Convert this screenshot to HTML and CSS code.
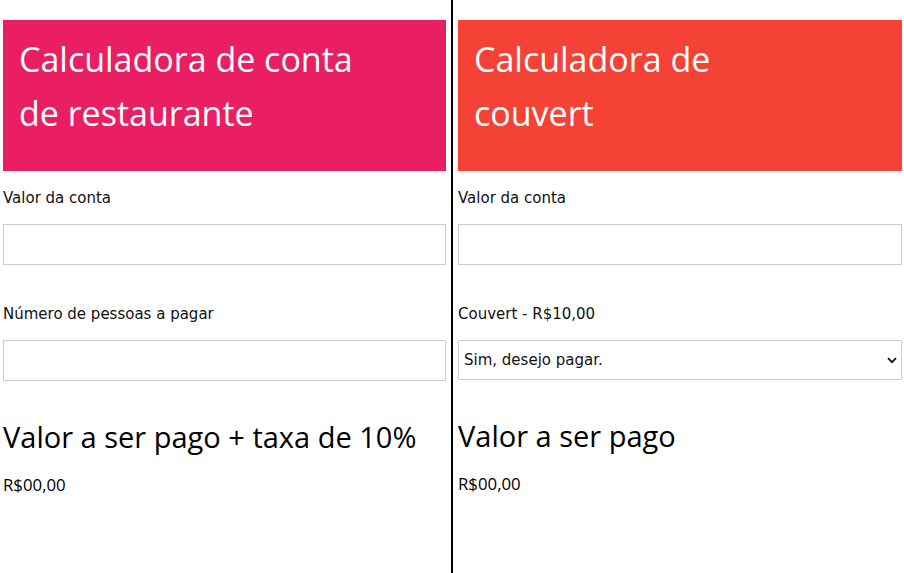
FILE: index.html
```html
<!DOCTYPE html>
<html lang="pt-BR">
<head>
<meta charset="utf-8">
<title>Calculadoras</title>
<link rel="stylesheet" href="styles.css">
</head>
<body>
<div class="app">
  <section class="calc calc-left">
    <header class="banner banner-pink">
      <h1 class="banner-title">Calculadora de conta<br>de restaurante</h1>
    </header>
    <div class="form">
      <div class="field">
        <label class="field-label" for="conta1">Valor da conta</label>
        <input class="field-input" id="conta1" type="text">
      </div>
      <div class="field">
        <label class="field-label" for="pessoas">Número de pessoas a pagar</label>
        <input class="field-input" id="pessoas" type="text">
      </div>
    </div>
    <h2 class="result-title">Valor a ser pago + taxa de 10%</h2>
    <p class="result-value">R$00,00</p>
  </section>
  <section class="calc calc-right">
    <header class="banner banner-red">
      <h1 class="banner-title">Calculadora de<br>couvert</h1>
    </header>
    <div class="form">
      <div class="field">
        <label class="field-label" for="conta2">Valor da conta</label>
        <input class="field-input" id="conta2" type="text">
      </div>
      <div class="field">
        <label class="field-label" for="couvert">Couvert - R$10,00</label>
        <div class="select-wrap">
          <select class="field-input field-select" id="couvert">
            <option>Sim, desejo pagar.</option>
            <option>Não, obrigado.</option>
          </select>
          <svg class="select-arrow" width="10" height="7" viewBox="0 0 10 7"><path d="M1 1.2 L5 5.2 L9 1.2" fill="none" stroke="#111" stroke-width="1.8"/></svg>
        </div>
      </div>
    </div>
    <h2 class="result-title">Valor a ser pago</h2>
    <p class="result-value">R$00,00</p>
  </section>
</div>
</body>
</html>
```
FILE: styles.css
```css
html, body {
  margin: 0;
  padding: 0;
  background: #fff;
}
body {
  font-family: "Open Sans", "Noto Sans", sans-serif;
  color: #000;
}
.app {
  display: grid;
  grid-template-columns: 453px 1fr;
  min-height: 100vh;
}
.calc {
  padding-top: 20px;
  min-height: 573px;
  box-sizing: border-box;
}
.calc-left {
  padding-left: 3px;
  padding-right: 5px;
  border-right: 2px solid #000;
}
.calc-right {
  padding-left: 5px;
  padding-right: 2px;
}
.banner {
  padding: 12px 16px 31px;
}
.banner-pink { background: #e91e63; }
.banner-red { background: #f44336; }
.banner-title {
  margin: 0;
  color: #fff;
  font-weight: 400;
  font-size: 34px;
  line-height: 54px;
}
.form {
  display: flex;
  flex-direction: column;
  gap: 41px;
  margin-top: 19px;
}
.field {
  display: flex;
  flex-direction: column;
}
.field-label {
  font-family: "DejaVu Sans", Verdana, sans-serif;
  font-size: 15px;
  line-height: 17px;
  margin-bottom: 17px;
  color: #111;
}
.field-input {
  box-sizing: border-box;
  width: 100%;
  height: 41px;
  border: 1px solid #ccc;
  border-radius: 0;
  background: #fff;
  margin: 0;
  padding: 0 5px;
  font-family: "DejaVu Sans", Verdana, sans-serif;
  font-size: 15px;
  color: #111;
  outline: none;
}
.field-select {
  -webkit-appearance: none;
  appearance: none;
  height: 40px;
}
.select-wrap {
  position: relative;
}
.select-arrow {
  position: absolute;
  right: 5px;
  top: 17px;
  pointer-events: none;
}
.result-title {
  margin: 38px 0 0;
  font-weight: 400;
  font-size: 29px;
  line-height: 35px;
}
.result-value {
  margin: 21px 0 0;
  font-size: 16.8px;
  line-height: 20px;
}
```
